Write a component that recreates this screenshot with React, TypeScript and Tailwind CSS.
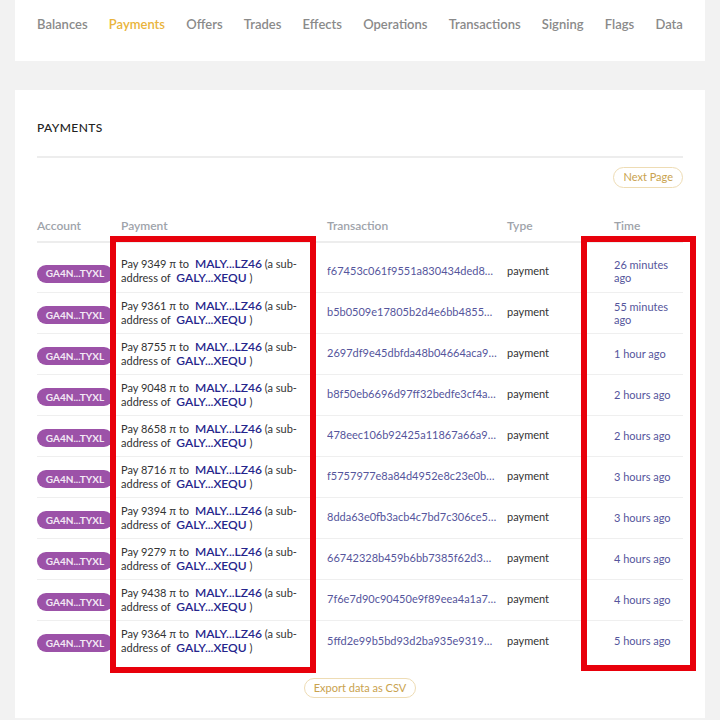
import React from "react";

const tabs = [
  "Balances",
  "Payments",
  "Offers",
  "Trades",
  "Effects",
  "Operations",
  "Transactions",
  "Signing",
  "Flags",
  "Data",
];

const rows = [
  { amount: "9349", tx: "f67453c061f9551a830434ded85e0a11", time: "26 minutes ago" },
  { amount: "9361", tx: "b5b0509e17805b2d4e6bb4855bc9a2f1", time: "55 minutes ago" },
  { amount: "8755", tx: "2697df9e45dbfda48b04664aca9e1c03", time: "1 hour ago" },
  { amount: "9048", tx: "b8f50eb6696d97ff32bedfe3cf4a8812", time: "2 hours ago" },
  { amount: "8658", tx: "478eec106b92425a11867a66a98f3c21", time: "2 hours ago" },
  { amount: "8716", tx: "f5757977e8a84d4952e8c23e0b4f7d10", time: "3 hours ago" },
  { amount: "9394", tx: "8dda63e0fb3acb4c7bd7c306ce5a9e44", time: "3 hours ago" },
  { amount: "9279", tx: "66742328b459b6bb7385f62d33c8e1a0", time: "4 hours ago" },
  { amount: "9438", tx: "7f6e7d90c90450e9f89eea4a1a7c2d55", time: "4 hours ago" },
  { amount: "9364", tx: "5ffd2e99b5bd93d2ba935e93192f6b87", time: "5 hours ago" },
];

function AccountBadge() {
  return (
    <span className="inline-flex h-[18px] w-[76px] items-center justify-center whitespace-nowrap rounded-full bg-[#9c52a8] text-[10px] font-bold text-[#f3e9f5]">
      GA4N...TYXL
    </span>
  );
}

function PaymentCell({ amount }: { amount: string }) {
  return (
    <div className="text-[11px] leading-[14px] text-[#333]">
      Pay {amount} π to <a className="ml-[3px] text-[12px] font-semibold text-[#25258c]">MALY...LZ46</a> (a
      sub-address of <a className="ml-[3px] text-[12px] font-semibold text-[#25258c]">GALY...XEQU</a> )
    </div>
  );
}

export default function App() {
  return (
    <div
      className="relative min-h-screen bg-[#f2f2f2] px-[15px]"
      style={{ fontFamily: "Lato, 'Noto Sans', sans-serif" }}
    >
      {/* Tabs */}
      <div className="h-[61px] bg-white px-[22px] pt-[15px]">
        <nav className="flex justify-between text-[13px] font-semibold text-[#8a8a8a]">
          {tabs.map((t) => (
            <span key={t} className={t === "Payments" ? "text-[#e9b43c]" : ""}>
              {t}
            </span>
          ))}
        </nav>
      </div>

      {/* Payments card */}
      <div className="mt-[29px] bg-white px-[22px] pb-[20px] pt-[29px]">
        <h2 className="text-[12px] font-medium uppercase tracking-[0.4px] text-[#222]">Payments</h2>
        <div className="mt-[19px] h-[2px] bg-[#ededed]" />

        <div className="mt-[9px] flex justify-end">
          <button className="h-[21px] rounded-full border border-[#eedcb4] px-[9px] text-[11px] text-[#c9a24e]">
            Next Page
          </button>
        </div>

        <table className="mt-[29px] w-full table-fixed border-collapse">
          <thead>
            <tr className="border-b-2 border-[#ededed] text-left text-[12px] font-semibold text-[#9ea3aa]">
              <th className="w-[84px] pb-[6px] font-semibold">Account</th>
              <th className="w-[206px] pb-[6px] font-semibold">Payment</th>
              <th className="w-[180px] pb-[6px] font-semibold">Transaction</th>
              <th className="w-[107px] pb-[6px] font-semibold">Type</th>
              <th className="pb-[6px] font-semibold">Time</th>
            </tr>
          </thead>
          <tbody>
            <tr className="h-[9px]" />
            {rows.map((r, i) => (
              <tr key={i} className={`h-[41px] ${i > 0 ? "border-t border-[#efefef]" : ""}`}>
                <td className="align-middle">
                  <AccountBadge />
                </td>
                <td className="pr-[22px] align-middle">
                  <PaymentCell amount={r.amount} />
                </td>
                <td className="pr-[10px] align-middle">
                  <div className="truncate text-[11px] text-[#55559c]">{r.tx}</div>
                </td>
                <td className="align-middle text-[11px] text-[#333]">payment</td>
                <td className="align-middle">
                  <div className="w-[60px] text-[11px] leading-[13px] text-[#55559c]">{r.time}</div>
                </td>
              </tr>
            ))}
          </tbody>
        </table>

        <div className="mt-[17px] flex justify-center">
          <button className="h-[20px] rounded-full border border-[#eedcb4] px-[9px] text-[11px] text-[#c9a24e]">
            Export data as CSV
          </button>
        </div>
      </div>

      {/* highlight overlays */}
      <div className="pointer-events-none absolute left-[110px] top-[236px] h-[437px] w-[206px] border-[6px] border-[#e8000b]" />
      <div className="pointer-events-none absolute left-[581px] top-[236px] h-[435px] w-[115px] border-[6px] border-[#e8000b]" />
    </div>
  );
}
